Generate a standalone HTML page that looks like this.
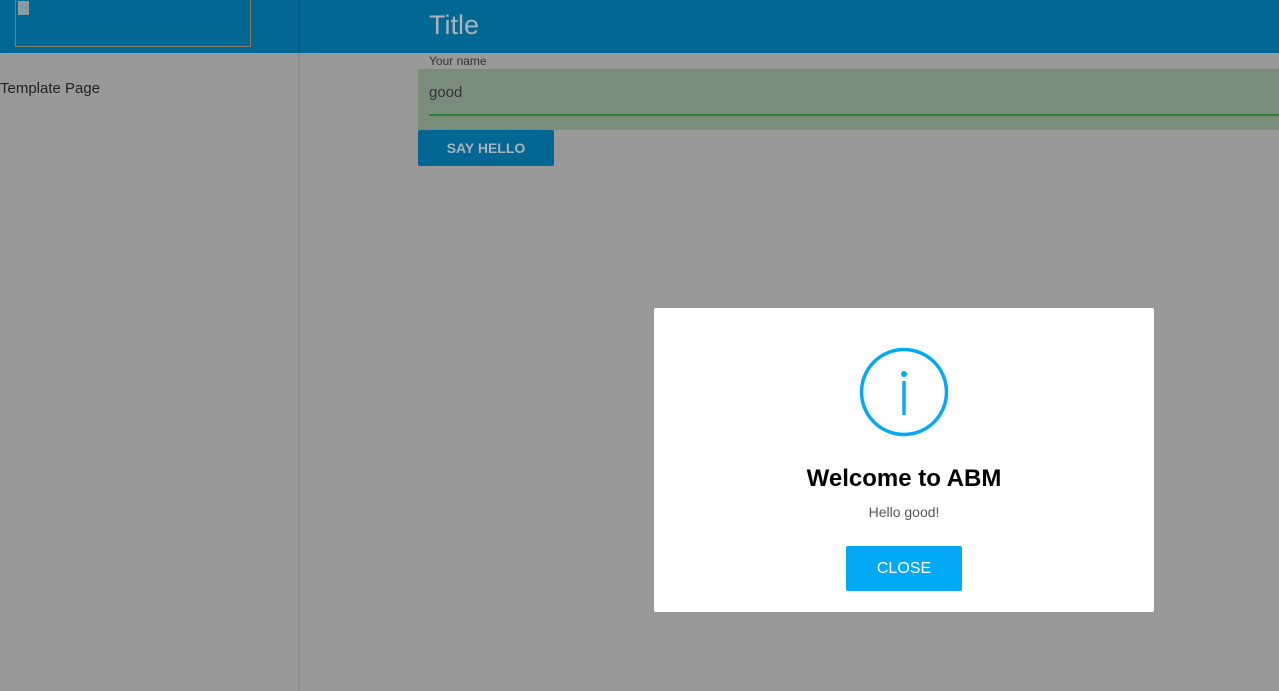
<!DOCTYPE html>
<html><head><style>
body{margin:0;width:1279px;height:691px;background:#999;font-family:"Liberation Sans",sans-serif;position:relative;overflow:hidden}
div{position:absolute;box-sizing:border-box}
</style></head><body>
<div style="left:0;top:0;width:1279px;height:53px;background:#036794"></div>
<div style="left:298px;top:53px;width:2px;height:638px;background:#8e8e8e"></div>
<div style="left:298px;top:0;width:2px;height:53px;background:#025d86"></div>
<div style="left:15px;top:-2px;width:236px;height:49px;border:1px solid #8a7a62"></div>
<div style="left:18px;top:1px;width:11px;height:14px;background:#8a9aa0"></div>
<div style="left:429px;top:10px;font-size:27px;color:#a8b4bc">Title</div>
<div style="left:0;top:80px;font-size:15px;color:#222">Template Page</div>
<div style="left:429px;top:54px;font-size:12px;color:#333">Your name</div>
<div style="left:418px;top:69px;width:861px;height:61px;background:#7a8d7a"></div>
<div style="left:429px;top:84px;font-size:15px;color:#333">good</div>
<div style="left:429px;top:114px;width:850px;height:2px;background:#2e7d32"></div>
<div style="left:418px;top:130px;width:136px;height:36px;background:#036794;border-radius:2px;color:#a8b4bc;font-size:14px;font-weight:bold;text-align:center;line-height:36px">SAY HELLO</div>
<div style="left:654px;top:308px;width:500px;height:304px;background:#fff;border-radius:2px"></div>
<svg style="position:absolute;left:859px;top:347px" width="90" height="90"><circle cx="45" cy="45" r="42.5" fill="none" stroke="#03a9f4" stroke-width="3.5"/><circle cx="45" cy="27" r="3" fill="#03a9f4"/><rect x="43.3" y="34" width="3.4" height="34" fill="#03a9f4"/></svg>
<div style="left:654px;top:465px;width:500px;text-align:center;font-size:24px;font-weight:bold;color:#000">Welcome to ABM</div>
<div style="left:654px;top:504px;width:500px;text-align:center;font-size:14px;color:#555">Hello good!</div>
<div style="left:846px;top:546px;width:116px;height:45px;background:#03a9f4;border-radius:2px;color:#fff;font-size:16px;text-align:center;line-height:45px">CLOSE</div>
</body></html>
